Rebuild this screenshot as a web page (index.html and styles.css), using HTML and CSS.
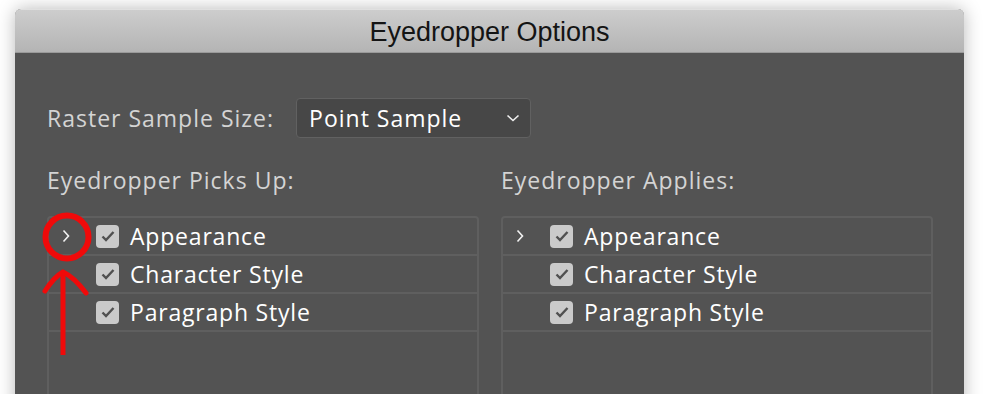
FILE: index.html
```html
<!DOCTYPE html>
<html lang="en">
<head>
    <meta charset="UTF-8">
    <title>Eyedropper Options</title>
    <link rel="stylesheet" href="styles.css">
</head>
<body>
    <div class="dialog">
        <div class="titlebar">Eyedropper Options</div>

        <div class="content">
            <div class="sample-row">
                <span class="label">Raster Sample Size:</span>
                <div class="select">
                    <span>Point Sample</span>
                    <svg class="select-arrow" width="14" height="8" viewBox="0 0 14 8">
                        <path d="M1.5 1.5 L7 6.5 L12.5 1.5" fill="none" stroke="#f0f0f0" stroke-width="1.6"/>
                    </svg>
                </div>
            </div>

            <div class="columns">
                <!-- Picks up -->
                <div class="column">
                    <div class="label heading">Eyedropper Picks Up:</div>
                    <div class="panel">
                        <div class="row">
                            <span class="twisty"><svg width="8" height="14" viewBox="0 0 8 14"><path d="M1.5 1.5 L6.5 7 L1.5 12.5" fill="none" stroke="#f2f2f2" stroke-width="1.6"/></svg></span>
                            <span class="check"><svg width="14" height="12" viewBox="0 0 14 12"><path d="M1.5 6.5 L5 10 L12.5 2" fill="none" stroke="#505050" stroke-width="2.4"/></svg></span>
                            <span class="item">Appearance</span>
                        </div>
                        <div class="row">
                            <span class="twisty"></span>
                            <span class="check"><svg width="14" height="12" viewBox="0 0 14 12"><path d="M1.5 6.5 L5 10 L12.5 2" fill="none" stroke="#505050" stroke-width="2.4"/></svg></span>
                            <span class="item">Character Style</span>
                        </div>
                        <div class="row">
                            <span class="twisty"></span>
                            <span class="check"><svg width="14" height="12" viewBox="0 0 14 12"><path d="M1.5 6.5 L5 10 L12.5 2" fill="none" stroke="#505050" stroke-width="2.4"/></svg></span>
                            <span class="item">Paragraph Style</span>
                        </div>
                    </div>
                </div>

                <!-- Applies -->
                <div class="column">
                    <div class="label heading">Eyedropper Applies:</div>
                    <div class="panel">
                        <div class="row">
                            <span class="twisty"><svg width="8" height="14" viewBox="0 0 8 14"><path d="M1.5 1.5 L6.5 7 L1.5 12.5" fill="none" stroke="#f2f2f2" stroke-width="1.6"/></svg></span>
                            <span class="check"><svg width="14" height="12" viewBox="0 0 14 12"><path d="M1.5 6.5 L5 10 L12.5 2" fill="none" stroke="#505050" stroke-width="2.4"/></svg></span>
                            <span class="item">Appearance</span>
                        </div>
                        <div class="row">
                            <span class="twisty"></span>
                            <span class="check"><svg width="14" height="12" viewBox="0 0 14 12"><path d="M1.5 6.5 L5 10 L12.5 2" fill="none" stroke="#505050" stroke-width="2.4"/></svg></span>
                            <span class="item">Character Style</span>
                        </div>
                        <div class="row">
                            <span class="twisty"></span>
                            <span class="check"><svg width="14" height="12" viewBox="0 0 14 12"><path d="M1.5 6.5 L5 10 L12.5 2" fill="none" stroke="#505050" stroke-width="2.4"/></svg></span>
                            <span class="item">Paragraph Style</span>
                        </div>
                    </div>
                </div>
            </div>
        </div>

        <!-- red annotation over the twisty -->
        <svg class="annotation" width="70" height="160" viewBox="0 0 70 160">
            <circle cx="37" cy="28" r="21.5" fill="none" stroke="#f00a0a" stroke-width="6"/>
            <path d="M33 64 V146" fill="none" stroke="#f00a0a" stroke-width="5"/>
            <path d="M15 82 Q24 68 33 63 Q44 68 56 84" fill="none" stroke="#f00a0a" stroke-width="5" stroke-linecap="round"/>
        </svg>
    </div>
</body>
</html>
```

FILE: styles.css
```css
body {
    margin: 0;
    background-color: #ffffff;
    font-family: 'Open Sans', sans-serif;
    overflow: hidden;
    height: 394px;
}
.dialog {
    position: relative;
    margin: 9px 0 0 15px;
    width: 949px;
    height: 420px;
    background-color: #535353;
    border-radius: 6px 6px 0 0;
    box-shadow: 0 0 18px rgba(0, 0, 0, 0.28);
}
.titlebar {
    box-sizing: border-box;
    height: 44px;
    line-height: 44px;
    text-align: center;
    font-family: 'Liberation Sans', sans-serif;
    font-size: 27px;
    letter-spacing: 0;
    color: #141414;
    background: linear-gradient(#cdcdcd, #b4b4b4);
    border-top: 1px solid #e0e0e0;
    border-bottom: 1px solid #9a9a9a;
    border-radius: 6px 6px 0 0;
}
.content {
    padding: 45px 31px 0 32px;
}
.label {
    color: #d4d4d4;
    font-size: 23px;
    letter-spacing: 1px;
}
.sample-row {
    display: flex;
    align-items: center;
    gap: 22px;
}
.select {
    display: flex;
    align-items: center;
    justify-content: space-between;
    box-sizing: border-box;
    width: 235px;
    height: 40px;
    padding: 0 10px 0 12px;
    background-color: #474747;
    border: 1px solid #616161;
    border-radius: 4px;
    color: #ffffff;
    font-size: 23px;
    letter-spacing: 1px;
}
.columns {
    display: flex;
    gap: 22px;
    margin-top: 26px;
}
.column {
    width: 432px;
}
.heading {
    height: 52px;
}
.panel {
    border: 2px solid #5f5f5f;
    border-radius: 4px 4px 0 0;
    height: 200px;
}
.row {
    display: flex;
    align-items: center;
    height: 36px;
    border-bottom: 2px solid #5f5f5f;
}
.twisty {
    box-sizing: border-box;
    width: 47px;
    padding-left: 13px;
    display: flex;
}
.check {
    width: 23px;
    height: 23px;
    border-radius: 4px;
    background-color: #cacaca;
    display: flex;
    align-items: center;
    justify-content: center;
    margin-right: 11px;
}
.item {
    color: #ffffff;
    font-size: 23px;
    letter-spacing: 0.8px;
}
.annotation {
    position: absolute;
    left: 15px;
    top: 200px;
}
```
